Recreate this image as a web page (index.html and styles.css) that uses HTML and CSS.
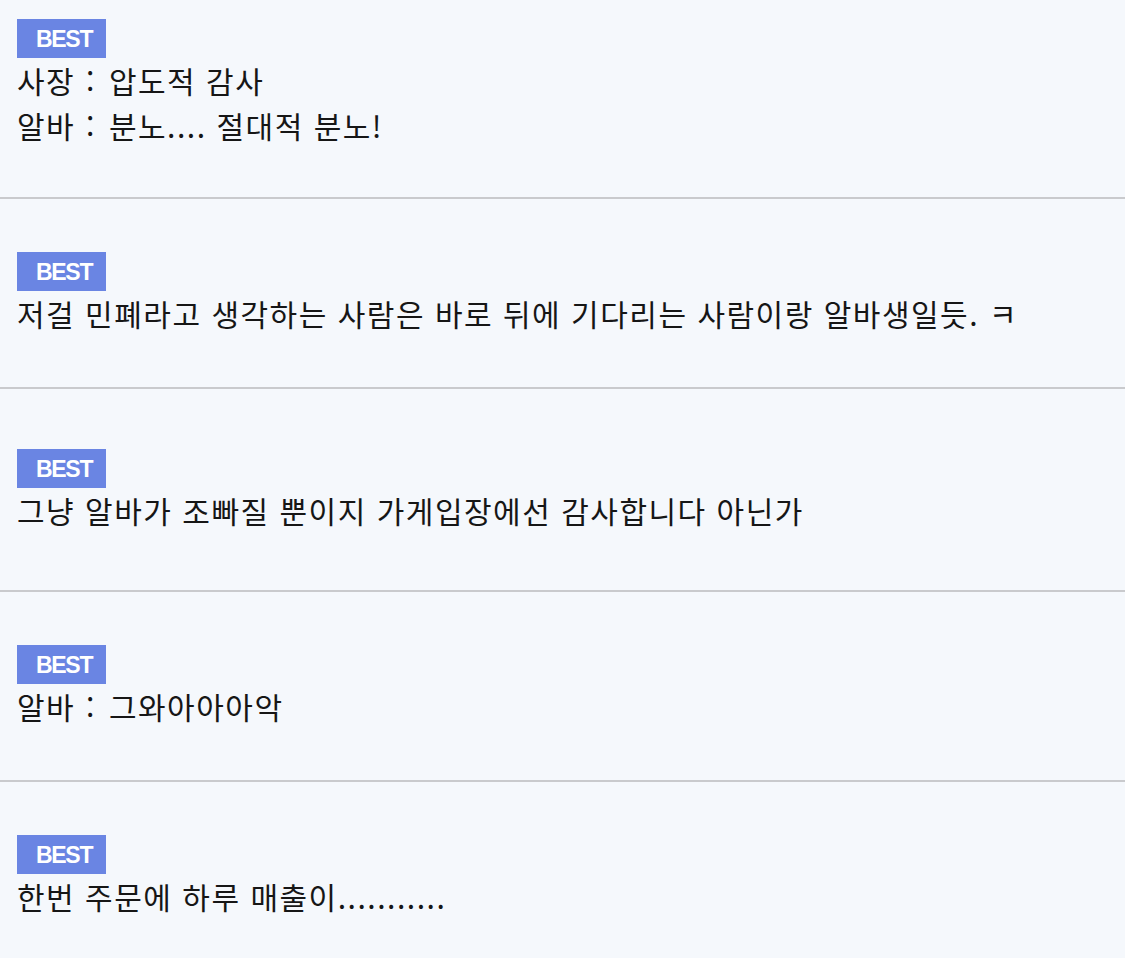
FILE: index.html
```html
<!DOCTYPE html>
<html lang="ko">
<head>
    <meta charset="UTF-8">
    <title>베스트 댓글</title>
    <link rel="stylesheet" href="styles.css">
</head>
<body>
    <div class="comment-list">
        <div class="comment first">
            <span class="best-badge">BEST</span>
            <p>사장 <span class="sep">:</span> 압도적 감사</p>
            <p>알바 <span class="sep">:</span> 분노.... 절대적 분노!</p>
        </div>
        <div class="comment">
            <span class="best-badge">BEST</span>
            <p>저걸 민폐라고 생각하는 사람은 바로 뒤에 기다리는 사람이랑 알바생일듯. ㅋ</p>
        </div>
        <div class="comment tall">
            <span class="best-badge">BEST</span>
            <p>그냥 알바가 조빠질 뿐이지 가게입장에선 감사합니다 아닌가</p>
        </div>
        <div class="comment">
            <span class="best-badge">BEST</span>
            <p>알바 <span class="sep">:</span> 그와아아아악</p>
        </div>
        <div class="comment last">
            <span class="best-badge">BEST</span>
            <p>한번 주문에 하루 매출이...........</p>
        </div>
    </div>
</body>
</html>
```

FILE: styles.css
```css
body {
    margin: 0;
    background-color: #f5f8fc;
    font-family: "Noto Sans CJK KR", "Noto Sans", sans-serif;
    color: #161616;
}

.comment-list {
    display: flex;
    flex-direction: column;
}

.comment {
    padding: 53px 17px 51px;
    border-bottom: 2px solid #c9cacd;
}

.comment.first {
    padding-top: 19px;
    padding-bottom: 49px;
}

.comment.tall {
    padding-top: 60px;
    padding-bottom: 57px;
}

.comment.last {
    border-bottom: none;
}

.comment p {
    margin: 0;
    font-size: 30px;
    line-height: 45px;
    letter-spacing: 1.5px;
}

/* the colon gets a little more air, like the original */
.comment p .sep {
    margin: 0 3px 0 1px;
}

.best-badge {
    display: inline-block;
    height: 39px;
    line-height: 40px;
    padding: 0 14px 0 19px;
    background-color: #6a85e3;
    color: #ffffff;
    font-family: "Liberation Sans", Arial, sans-serif;
    font-weight: bold;
    font-size: 23px;
    letter-spacing: -1.3px;
    vertical-align: top;
}
```
